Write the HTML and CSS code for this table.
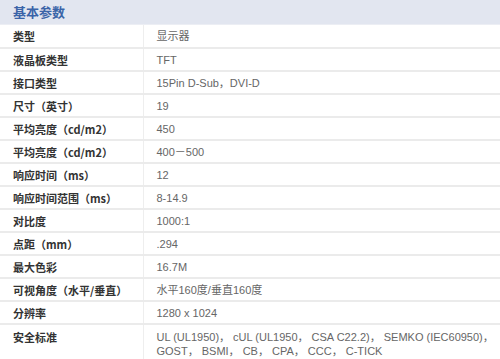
FILE: index.html
```html
<!DOCTYPE html>
<html lang="zh">
<head>
<meta charset="utf-8">
<link rel="stylesheet" href="styles.css">
</head>
<body>
<div class="spec">
  <div class="spec-head">基本参数</div>
  <table class="spec-table">
    <tr><th>类型</th><td>显示器</td></tr>
    <tr><th>液晶板类型</th><td>TFT</td></tr>
    <tr><th>接口类型</th><td>15Pin D-Sub，DVI-D</td></tr>
    <tr><th>尺寸（英寸）</th><td>19</td></tr>
    <tr><th>平均亮度（cd/m2）</th><td>450</td></tr>
    <tr><th>平均亮度（cd/m2）</th><td>400－500</td></tr>
    <tr><th>响应时间（ms）</th><td>12</td></tr>
    <tr><th>响应时间范围（ms）</th><td>8-14.9</td></tr>
    <tr><th>对比度</th><td>1000:1</td></tr>
    <tr><th>点距（mm）</th><td>.294</td></tr>
    <tr><th>最大色彩</th><td>16.7M</td></tr>
    <tr><th>可视角度（水平/垂直）</th><td>水平160度/垂直160度</td></tr>
    <tr><th>分辨率</th><td>1280 x 1024</td></tr>
    <tr class="tall"><th>安全标准</th><td>UL (UL1950)， cUL (UL1950， CSA C22.2)， SEMKO (IEC60950)， GOST， BSMI， CB， CPA， CCC， C-TICK</td></tr>
  </table>
</div>
</body>
</html>
```
FILE: styles.css
```css
html, body {
  margin: 0;
  padding: 0;
  background: #fff;
}
body {
  font-family: "Liberation Sans", "Noto Sans CJK SC", sans-serif;
  font-size: 12px;
}
.spec {
  width: 500px;
}
.spec-head {
  height: 24px;
  line-height: 24px;
  background: #e2e6f0;
  border-bottom: 1px solid #eceef4;
  color: #3a64a8;
  font-weight: bold;
  font-size: 13px;
  padding-left: 13px;
  font-family: "Noto Sans CJK SC", sans-serif;
}
.spec-table {
  width: 100%;
  border-collapse: collapse;
}
.spec-table th,
.spec-table td {
  box-sizing: border-box;
  height: 23px;
  padding: 4px 0 0 13px;
  border-bottom: 2px solid #ebebeb;
  vertical-align: top;
  line-height: 15px;
  text-align: left;
}
.spec-table th {
  width: 143px;
  border-right: 1px solid #eeeeee;
  color: #333;
  font-weight: bold;
  font-size: 11px;
  font-family: "Noto Sans CJK SC", sans-serif;
}
.spec-table td {
  color: #666;
  font-size: 11px;
}
.spec-table tr.tall th,
.spec-table tr.tall td {
  height: 35px;
  border-bottom: none;
  padding-top: 5px;
  line-height: 14px;
}
```
